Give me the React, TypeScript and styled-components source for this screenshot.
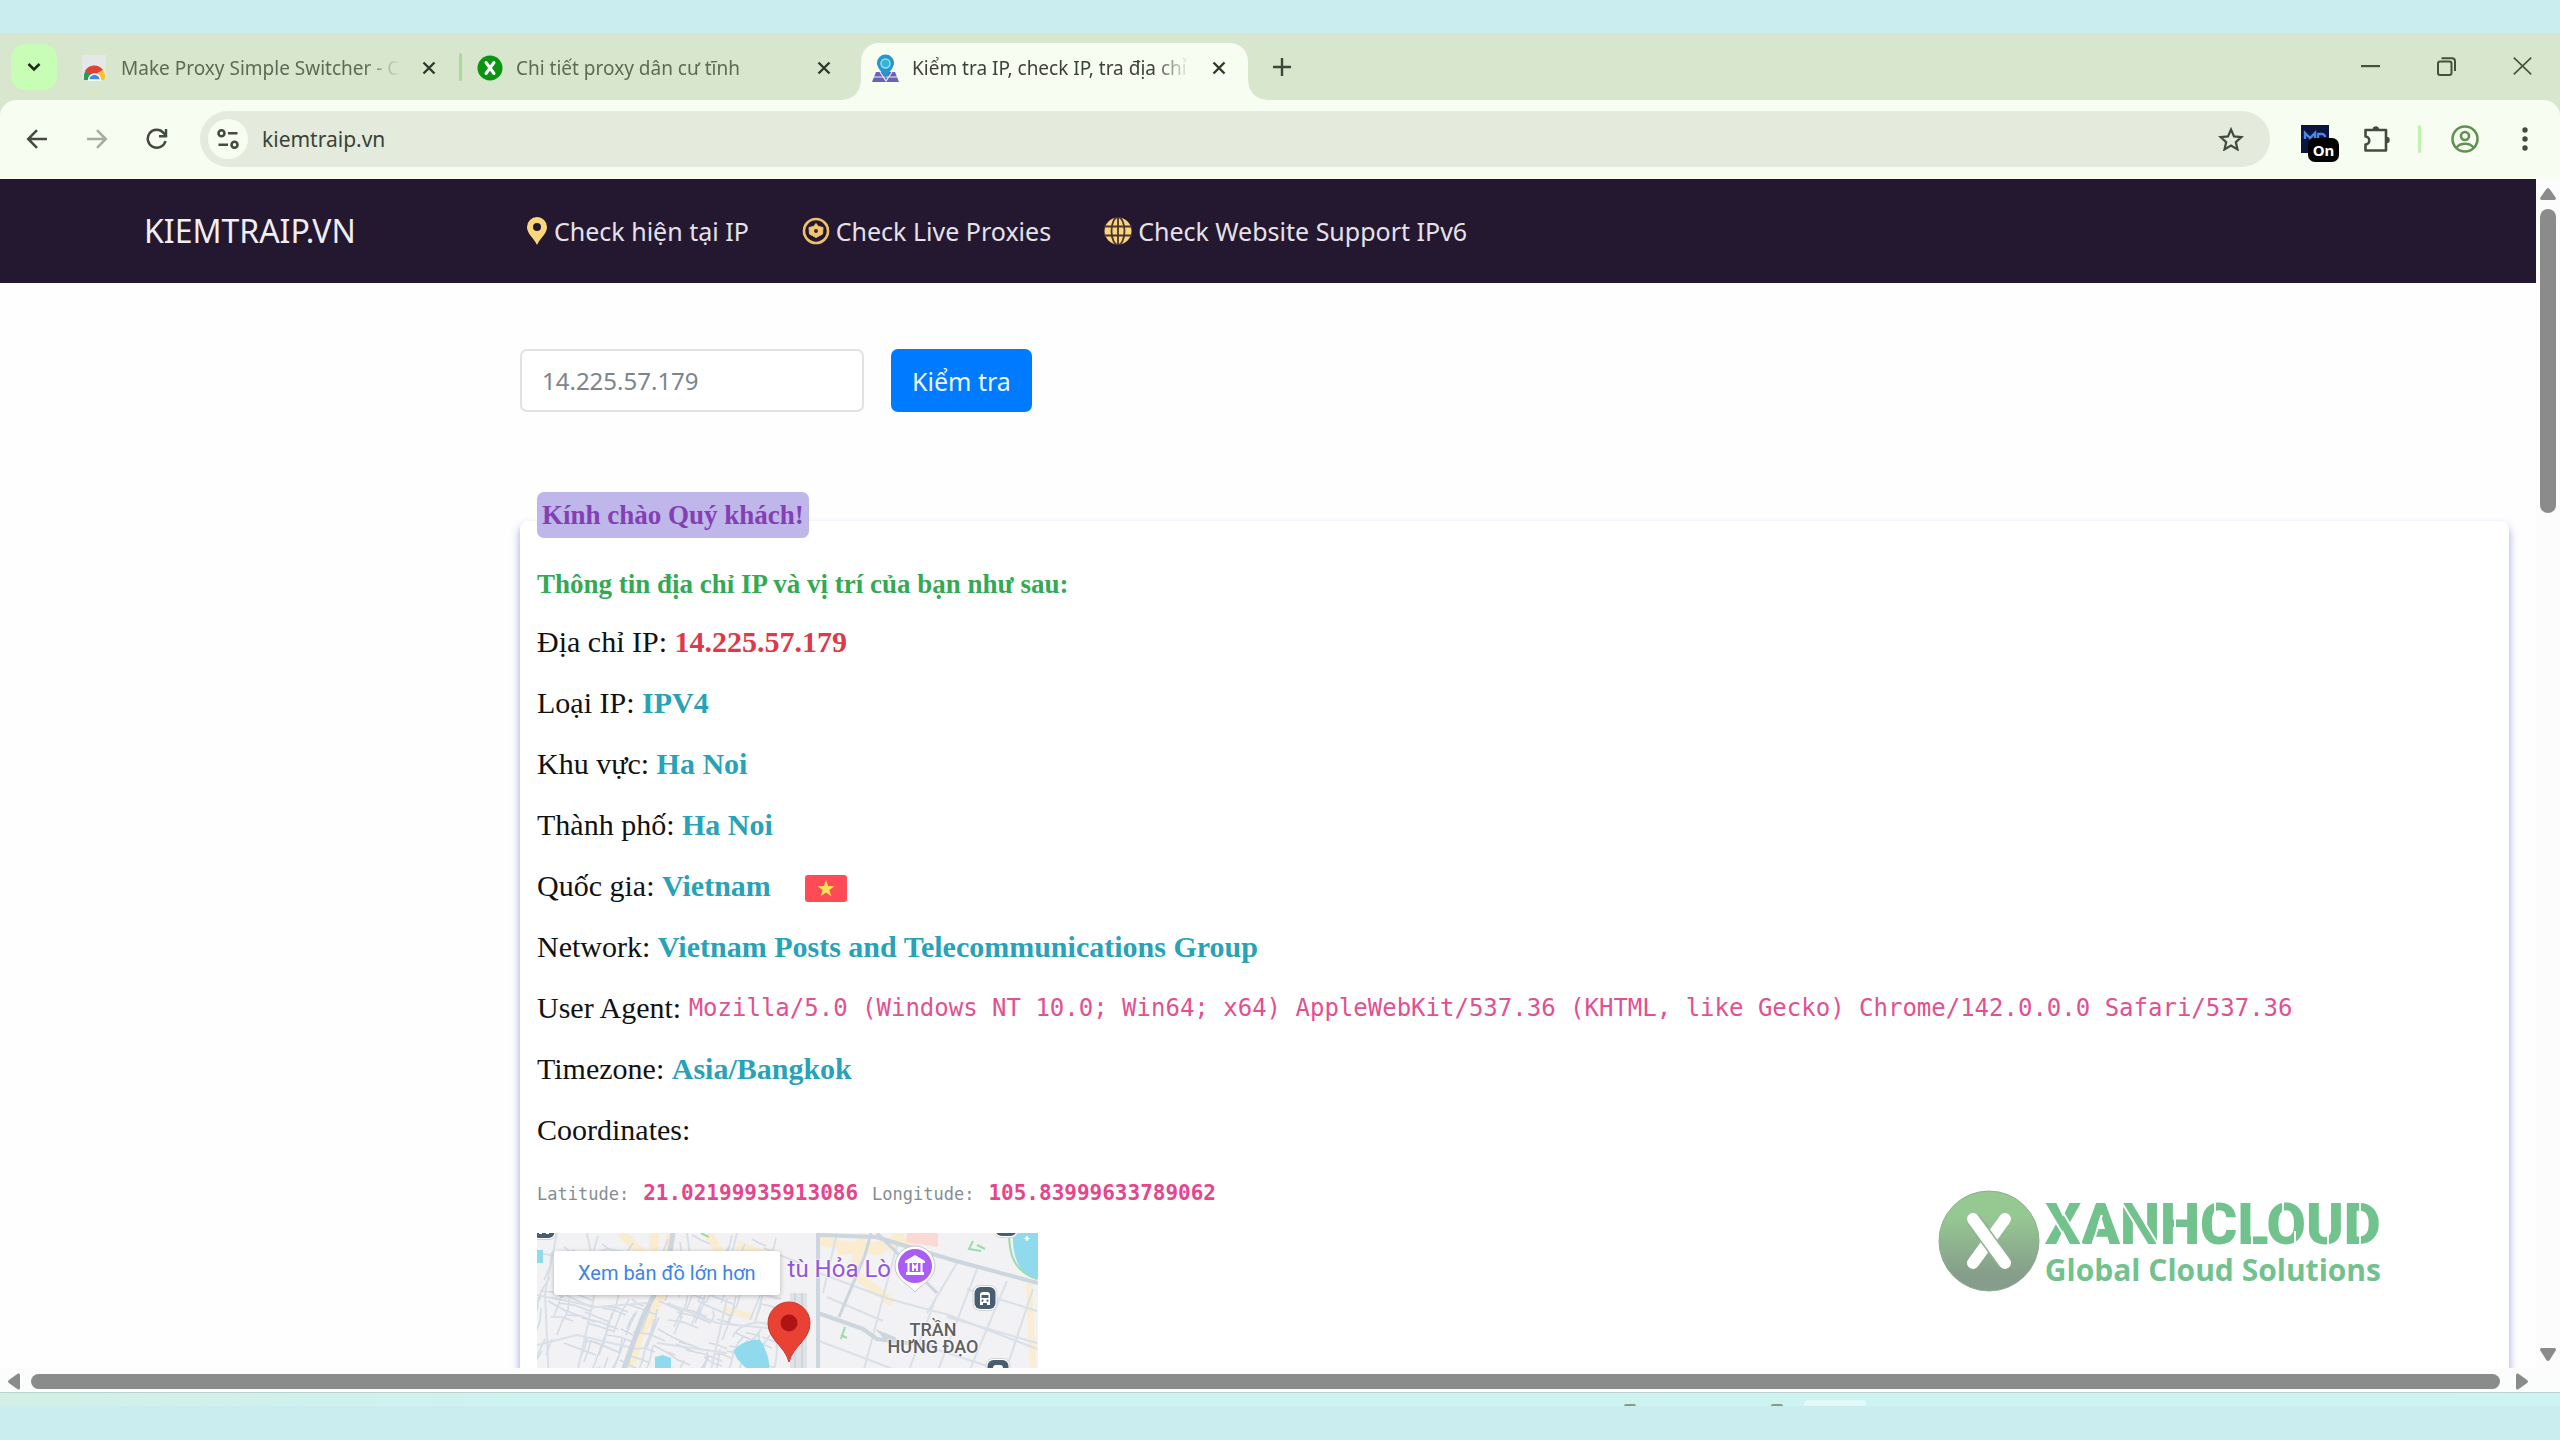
import React from "react";
import styled, { createGlobalStyle, css } from "styled-components";

const sans = `"Noto Sans", "Open Sans", sans-serif`;
const serif = `"Liberation Serif", serif`;
const mono = `"DejaVu Sans Mono", monospace`;

const Global = createGlobalStyle`
  *, *::before, *::after { box-sizing: border-box; }
  body { margin: 0; background: #caedef; font-family: ${sans}; }
  button, input { font: inherit; margin: 0; }
  button { border: 0; padding: 0; background: none; cursor: pointer; color: inherit; }
  a { color: inherit; text-decoration: none; }
  p, h1, h2 { margin: 0; }
  svg { display: block; flex: none; }
`;

/* ---------- desktop and window frame ---------- */

const Desktop = styled.div`
  position: relative;
  display: flex;
  flex-direction: column;
  height: 100vh;
  padding: 33px 0 34px;
  background: #caedef;
  overflow: hidden;
`;

const Window = styled.div`
  flex: 1;
  min-height: 0;
  display: flex;
  flex-direction: column;
  background: #d7e6cc;
`;

const Taskbar = styled.div`
  height: 14px;
  padding-left: 1624px;
  display: flex;
  align-items: flex-end;
  background: linear-gradient(90deg, #d3efe4, #cdf3f0 20%, #cdf3f2);
  border-top: 1px solid #bcd0d0;
`;

const TaskMark = styled.span`
  width: 12px;
  height: 2px;
  margin-right: 135px;
  border-radius: 2px 2px 0 0;
  background: #8c9c80;
`;

const TaskGroup = styled.span`
  width: 62px;
  height: 6px;
  margin-left: -114px;
  border-radius: 4px 4px 0 0;
  background: #e2f9fa;
`;

/* ---------- tab strip ---------- */

const TabStrip = styled.div`
  display: flex;
  align-items: flex-end;
  height: 67px;
  padding-left: 11px;
  color: #3c463a;
`;

const TabSearch = styled.button`
  display: grid;
  place-items: center;
  width: 46px;
  height: 46px;
  margin: 0 14px 10px 0;
  border-radius: 14px;
  background: #c8fdb6;
  color: #1d2b18;
`;

const Tab = styled.div<{ $active?: boolean }>`
  position: relative;
  display: flex;
  align-items: center;
  width: 387px;
  height: 57px;
  padding: 0 22px 8px 11px;
  border-radius: 18px 18px 0 0;
  color: #5b6b57;
  ${(p) =>
    p.$active &&
    css`
      background: #f8fdf1;
      color: #3b4239;
      &::before,
      &::after {
        content: "";
        position: absolute;
        bottom: 0;
        width: 18px;
        height: 18px;
      }
      &::before {
        right: 100%;
        background: radial-gradient(circle at 0 0, transparent 17px, #f8fdf1 18px);
      }
      &::after {
        left: 100%;
        background: radial-gradient(circle at 100% 0, transparent 17px, #f8fdf1 18px);
      }
    `}
`;

const TabDivider = styled.span<{ $hidden?: boolean }>`
  width: 3px;
  height: 28px;
  margin: 0 4px 19px 1px;
  border-radius: 2px;
  background: ${(p) => (p.$hidden ? "transparent" : "#a6dc96")};
`;

const TabTitle = styled.span`
  flex: 1;
  min-width: 0;
  margin: 0 22px 0 13px;
  overflow: hidden;
  white-space: nowrap;
  font-size: 19px;
  line-height: 28px;
  mask-image: linear-gradient(90deg, #000 calc(100% - 36px), transparent);
`;

const CloseButton = styled.button`
  display: grid;
  place-items: center;
  width: 14px;
  height: 20px;
  color: #2f3a2c;
`;

const NewTab = styled.button`
  display: grid;
  place-items: center;
  width: 28px;
  height: 28px;
  margin: 0 0 19px 20px;
`;

const WindowControls = styled.div`
  display: flex;
  align-items: center;
  gap: 56px;
  margin-left: auto;
  padding: 0 28px 24px 0;
`;

const ControlButton = styled.button`
  display: grid;
  place-items: center;
  width: 20px;
  height: 20px;
  color: #45503f;
`;

/* ---------- toolbar ---------- */

const Toolbar = styled.div`
  display: flex;
  align-items: center;
  height: 79px;
  padding: 0 23px 1px 25px;
  background: #f8fdf1;
  border-radius: 16px 16px 0 0;
  color: #434b40;
`;

const NavButtons = styled.div`
  display: flex;
  gap: 36px;
  margin-right: 31px;
`;

const IconButton = styled.button<{ $dim?: boolean }>`
  display: grid;
  place-items: center;
  width: 24px;
  height: 28px;
  opacity: ${(p) => (p.$dim ? 0.45 : 1)};
`;

const Omnibox = styled.div`
  flex: 1;
  display: flex;
  align-items: center;
  height: 56px;
  padding: 0 28px 0 8px;
  border-radius: 28px;
  background: #e4ebdc;
`;

const SiteInfo = styled.button`
  display: grid;
  place-items: center;
  width: 40px;
  height: 40px;
  border-radius: 50%;
  background: #f8fdf1;
`;

const Address = styled.input`
  flex: 1;
  min-width: 0;
  padding: 0 0 0 14px;
  border: 0;
  outline: 0;
  background: none;
  font-size: 21px;
  line-height: 30px;
  color: #3b4239;
`;

const ToolActions = styled.div`
  display: flex;
  align-items: center;
  margin-left: 31px;
`;

const Extension = styled.button`
  position: relative;
  width: 28px;
  height: 28px;
  margin-right: 34px;
`;

const ExtensionBadge = styled.span`
  position: absolute;
  left: 7px;
  top: 13px;
  width: 31px;
  height: 24px;
  border-radius: 7px;
  background: #000;
  color: #fff;
  font-size: 15px;
  font-weight: 700;
  line-height: 24px;
  text-align: center;
`;

const ToolDivider = styled.span`
  width: 3px;
  height: 28px;
  margin: 0 30px 0 31px;
  border-radius: 2px;
  background: #bdf2b0;
`;

const Profile = styled(IconButton)`
  width: 28px;
  margin-right: 34px;
  color: #5f9250;
`;

/* ---------- page viewport and scrollbars ---------- */

const Viewport = styled.div`
  flex: 1;
  min-height: 0;
  display: grid;
  grid-template-columns: minmax(0, 1fr) 24px;
  grid-template-rows: minmax(0, 1fr) 24px;
  background: #fcfcfd;
`;

const Page = styled.div`
  overflow: hidden;
  background: #fefefe;
`;

const VScroll = styled.div`
  display: flex;
  flex-direction: column;
  align-items: center;
  padding: 9px 0 7px;
`;

const VThumb = styled.span`
  width: 16px;
  height: 304px;
  margin: 9px 0 auto;
  border-radius: 8px;
  background: #8b8b8b;
`;

const HScroll = styled.div`
  display: flex;
  align-items: center;
  padding: 4px 8px 2px;
`;

const HThumb = styled.span`
  flex: 1;
  height: 15px;
  margin: 0 16px 0 11px;
  border-radius: 8px;
  background: #8b8b8b;
`;

/* ---------- site header ---------- */

const SiteHeader = styled.header`
  display: grid;
  grid-template-columns: 382px 1fr;
  align-items: center;
  height: 104px;
  padding-left: 144px;
  background: #241830;
  color: #f1eef3;
`;

const Brand = styled.a`
  font-size: 32px;
  line-height: 44px;
`;

const SiteNav = styled.nav`
  display: flex;
  gap: 53px;
`;

const NavLink = styled.a`
  display: flex;
  align-items: center;
  gap: 6px;
  font-size: 25px;
  line-height: 40px;
  white-space: nowrap;
  color: #e6e2e9;
`;

/* ---------- site content ---------- */

const Content = styled.main`
  padding: 66px 27px 0 520px;
`;

const LookupForm = styled.form`
  display: flex;
  gap: 27px;
`;

const HiddenLabel = styled.label`
  position: absolute;
  width: 1px;
  height: 1px;
  overflow: hidden;
  clip-path: inset(50%);
`;

const IpInput = styled.input`
  width: 344px;
  height: 63px;
  padding: 0 20px;
  border: 2px solid #dfe3e6;
  border-radius: 7px;
  background: #fff;
  font-size: 24px;
  color: #495057;
  &::placeholder { color: #7d858c; opacity: 1; }
`;

const SubmitButton = styled.button`
  height: 63px;
  padding: 0 21px;
  border-radius: 7px;
  background: #007bff;
  color: #eef6ff;
  font-size: 25px;
`;

const InfoCard = styled.section`
  display: flow-root;
  margin-top: 109px;
  padding: 0 17px 40px;
  border-radius: 8px;
  background: #fff;
  box-shadow: 0 5px 8px rgba(84, 96, 226, 0.6);
  font-family: ${serif};
`;

const Greeting = styled.h1`
  width: fit-content;
  margin-top: -29px;
  padding: 0 5px;
  border-radius: 7px;
  background: #bfb7ea;
  color: #8240b4;
  font-size: 27px;
  line-height: 46px;
`;

const Intro = styled.h2`
  margin: 26px 0 7px;
  color: #34a954;
  font-size: 27px;
  line-height: 40px;
`;

const InfoRow = styled.p`
  display: flex;
  align-items: center;
  height: 61px;
  font-size: 30px;
  line-height: 40px;
  white-space: pre;
  color: #111;
`;

const Value = styled.strong<{ $tone?: "red" }>`
  color: ${(p) => (p.$tone === "red" ? "#dc3a49" : "#27a2b7")};
`;

const AgentCode = styled.code`
  font-family: ${mono};
  font-size: 24px;
  color: #e3508f;
`;

const CoordRow = styled.p`
  display: flex;
  align-items: baseline;
  gap: 14px;
  height: 61px;
  padding-top: 18px;
  font-family: ${mono};
  font-size: 17px;
  line-height: 30px;
  color: #858c92;
`;

const CoordValue = styled.strong`
  font-size: 21px;
  color: #e5458b;
`;

const Flag = styled.svg`
  margin: 6px 0 0 34px;
`;

/* ---------- map ---------- */

const MapFrame = styled.div`
  position: relative;
  width: 501px;
  height: 300px;
  margin-top: 12px;
  overflow: hidden;
  font-family: Roboto, sans-serif;
`;

const LargerMapLink = styled.a`
  position: absolute;
  left: 17px;
  top: 18px;
  padding: 0 24px;
  border-radius: 3px;
  background: #fff;
  box-shadow: 0 1px 5px rgba(0, 0, 0, 0.25);
  color: #3b84e8;
  font-size: 20px;
  line-height: 44px;
  white-space: nowrap;
`;

const PlaceLabel = styled.span`
  position: absolute;
  right: 147px;
  top: 20px;
  display: flex;
  justify-content: flex-end;
  width: 110px;
  overflow: hidden;
  font-size: 24px;
  line-height: 32px;
  white-space: nowrap;
  color: #9256d8;
  text-shadow: 0 0 3px #fff, 0 0 3px #fff;
`;

const AreaLabel = styled.span`
  position: absolute;
  left: 340px;
  top: 88px;
  width: 112px;
  font-size: 18px;
  font-weight: 500;
  line-height: 17px;
  text-align: center;
  color: #5e6062;
  text-shadow: 0 0 3px #fff, 0 0 3px #fff;
`;

/* ---------- watermark ---------- */

const Watermark = styled.div`
  position: absolute;
  right: 179px;
  bottom: 148px;
  display: flex;
  align-items: center;
  gap: 5px;
  color: #72c28e;
`;

const WatermarkText = styled.div`
  display: flex;
  flex-direction: column;
  padding-top: 10px;
`;

const WatermarkName = styled.span`
  position: relative;
  font-family: Roboto, sans-serif;
  font-size: 57px;
  font-weight: 900;
  line-height: 48px;
`;

const StencilCuts = styled.svg`
  position: absolute;
  left: 0;
  top: 0;
`;

const WatermarkTagline = styled.span`
  font-family: "Open Sans", sans-serif;
  font-size: 30px;
  font-weight: 700;
  line-height: 42px;
`;

/* ---------- drawings ---------- */

const Cross = () => (
  <svg width="14" height="14" viewBox="0 0 14 14" stroke="currentColor" strokeWidth="2.4" fill="none">
    <path d="M1.5 1.5l11 11M12.5 1.5l-11 11" />
  </svg>
);

const StoreIcon = () => (
  <svg width="26" height="26" viewBox="0 0 26 26">
    <path d="M0 0h24v24H0z" fill="#e6e8e8" />
    <path d="M2 23a11 11 0 0 1 2-8l6 4-2 6H2z" fill="#2a9c50" />
    <path d="M3 16A10.500 10.500 0 0 1 21 15l-7 4-5 1z" fill="#dd4437" />
    <path d="M21 15a11 11 0 0 1 2 8l-1 2h-5l-2-6z" fill="#fbc12d" />
    <path d="M6.500 25a6 6 0 0 1 12 0z" fill="#4285f4" stroke="#fff" strokeWidth="1.500" />
  </svg>
);

const XanhIcon = () => (
  <svg width="26" height="26" viewBox="0 0 26 26">
    <circle cx="13" cy="13" r="12.500" fill="#0a9410" />
    <path d="M9 7.500l8 11M17 7.500l-8 11" stroke="#fff" strokeWidth="3" strokeLinecap="round" />
  </svg>
);

const MapTabIcon = () => (
  <svg width="27" height="28" viewBox="0 0 27 28">
    <path d="M4 18h19l4 10H0z" fill="#6a62b4" />
    <path d="M2 23h23M8 18l6 9 6-9" stroke="#e9eefc" strokeWidth="1.200" fill="none" />
    <path d="M13.500 24C9 17 5 13 5 9a8.500 8.500 0 0 1 17 0c0 4-4 8-8.500 15z" fill="#2497cc" />
    <circle cx="13.500" cy="9.500" r="4.500" fill="#35b2d8" stroke="#9adcf0" strokeWidth="1.500" />
  </svg>
);

const MuseumPin = () => (
  <g>
    <path d="M378 59c-4-6-20-12-20-26a20 20 0 0 1 40 0c0 14-16 20-20 26z" fill="#fff" stroke="#c9c3d2" strokeWidth="1" />
    <circle cx="378" cy="33" r="17" fill="#a95df5" />
    <path d="M378 22l-10 6v2h20v-2zM369 39h18v3h-18z" fill="#fff" />
    <path d="M371.500 30v9M384.500 30v9M376 38v-6l2 2.500 2-2.500v6" stroke="#fff" strokeWidth="2" fill="none" />
  </g>
);

const Station = ({ x, y }: { x: number; y: number }) => (
  <g transform={`translate(${x} ${y})`}>
    <rect x="-12" y="-12.500" width="24" height="25" rx="7" fill="#fff" stroke="#cfd4d8" strokeWidth="1" />
    <rect x="-10.500" y="-11" width="21" height="22" rx="6" fill="#475e72" />
    <path d="M-5 5v-8q0-3 3-3h4q3 0 3 3v8zM-5 5h3v2h-3zM2 5h3v2h-3z" fill="#fff" />
    <path d="M-3.500-3h7v3h-7z" fill="#475e72" />
    <circle cx="-2.500" cy="2.700" r="1.100" fill="#475e72" />
    <circle cx="2.500" cy="2.700" r="1.100" fill="#475e72" />
  </g>
);

/* Small irregular lanes, generated from a fixed seed so that they never change. */
const lanes = (() => {
  let seed = 11;
  const rnd = () => {
    seed = (seed * 16807) % 2147483647;
    return seed / 2147483647;
  };
  const out: string[] = [];
  for (let i = 0; i < 190; i++) {
    const x = rnd() * 245;
    const y = rnd() * 150;
    const across = rnd() > 0.5;
    const l = 12 + rnd() * 24;
    const j = rnd() * 8 - 4;
    out.push(
      across
        ? `M${x.toFixed(0)} ${y.toFixed(0)}l${(l / 2).toFixed(0)} ${(l / 6 + j).toFixed(0)}l${(l / 2).toFixed(0)} ${(l / 5).toFixed(0)}`
        : `M${x.toFixed(0)} ${y.toFixed(0)}l${(-l / 6 + j).toFixed(0)} ${(l / 2).toFixed(0)}l${(-l / 5).toFixed(0)} ${(l / 2).toFixed(0)}`
    );
  }
  return out.join("");
})();

const MapDrawing = () => (
  <svg width="501" height="300" viewBox="0 0 501 300" fill="none">
    <rect width="501" height="300" fill="#f2f1f3" />
    <g stroke="#fbecc8" strokeWidth="9" opacity=".8">
      <path d="M118 0l-2 24M134 0l-8 60-24 44-12 40M170 0l14 20M200 12l40 14M282 8l60 10 24-18M326 0l-10 40 40 30M300 18l80-10M84 0l26 26" />
      <path d="M492 50l4 90M186 76l30 8" strokeWidth="6" />
    </g>
    <path d="M370 0h31v14l-32-5z" fill="#fbd9d5" />
    <path d={lanes} stroke="#d3dbe4" strokeWidth="1.500" />
    <g stroke="#d9e0e7" strokeWidth="2">
      <path d="M282 40l70 26 60 16 88 34M290 64l56 24M282 108l90 34M300 0l-14 60M360 12l-34 128M400 62l-32 86M420 30l-30 50M440 36l-40 104M470 48l-42 100M496 56l-30 90M380 110l110 36M410 84l90 26M430 56l70 22" />
      <path d="M0 20l40 6 30-10 50 8M20 0l-12 60 4 90M50 0l10 50-20 90M0 62l60 12 50-4M0 112l40-10 60 14M150 0l4 30 40 24 50 12M130 70l50 20 60 6M120 110l70 10M200 0l-10 40M190 66l-18 80M226 60l-8 30" />
      <path d="M196 104c4-14 36-22 42-4 4 16 2 30-4 46" />
    </g>
    <path d="M253 60h17v90h-17z" fill="#dfe2e6" />
    <path d="M258 60v90M265 60v90" stroke="#d0d5da" strokeWidth="2" />
    <g stroke="#ccd6de" strokeLinejoin="round">
      <path d="M136 0l-3 18-15 42-13 26-22 60" strokeWidth="5" />
      <path d="M281 0v150" strokeWidth="4" />
      <path d="M281 2l58 2 80 24 82 22M281 80l45 16 14 10 60 8" strokeWidth="4" />
      <path d="M334 0l-6 22-26 62M340 0l60 60" strokeWidth="3" />
    </g>
    <path d="M338 96l20 8 8 10-14-3z" fill="#ccd6de" />
    <g stroke="#9bdcae" strokeWidth="2">
      <path d="M472 0c0 20 4 38 28 46M436 8l-4 8 12 2M440 12l8 4M304 102l6 3M164 0l8 4M308 94l-4 12" />
    </g>
    <g fill="#8fdaec">
      <path d="M476 0h25v46c-18-4-26-20-25-46z" />
      <path d="M197 118c6-9 18-12 26-11 6 8 10 20 9 29-10 3-22 2-26-4-4-4-8-8-9-14z" />
      <path d="M118 124l8-2 8 3v20h-16z" />
      <path d="M0 17h6v13H0z" />
    </g>
    <path d="M490 3v5M487.500 5.500h5" stroke="#fff" strokeWidth="1.500" />
    <MuseumPin />
    <Station x={448} y={65} />
    <Station x={461} y={138} />
    <Station x={7} y={-6} />
    <Station x={469} y={-8} />
    <path d="M252 129c-4-16-21-22-21-39a21 21 0 0 1 42 0c0 17-17 23-21 39z" fill="#e94235" stroke="#c5392d" strokeWidth="1" />
    <circle cx="252" cy="90" r="8.500" fill="#b01313" />
  </svg>
);

const LogoMark = () => (
  <svg width="102" height="102" viewBox="0 0 102 102">
    <defs>
      <linearGradient id="mark" x1="0" y1="0" x2="0" y2="1">
        <stop offset=".25" stopColor="#96c892" />
        <stop offset=".85" stopColor="#859d8a" />
      </linearGradient>
    </defs>
    <circle cx="51" cy="51" r="50" fill="url(#mark)" stroke="#8fae92" strokeWidth="1" />
    <path d="M67 29L35 73" stroke="#fff" strokeWidth="12" strokeLinecap="round" />
    <path d="M35 29l32 44" stroke="#8eb491" strokeWidth="15" />
    <path d="M35 29l32 44" stroke="#fff" strokeWidth="12" strokeLinecap="round" />
  </svg>
);

const tabs = [
  { title: "Make Proxy Simple Switcher - Chrome", Icon: StoreIcon },
  { title: "Chi tiết proxy dân cư tĩnh", Icon: XanhIcon },
  { title: "Kiểm tra IP, check IP, tra địa chỉ IP", Icon: MapTabIcon, active: true },
];

export default function App() {
  return (
    <Desktop>
      <Global />
      <Window>
        <TabStrip>
          <TabSearch aria-label="Search tabs">
            <svg width="14" height="10" viewBox="0 0 14 10" fill="none" stroke="currentColor" strokeWidth="2.600">
              <path d="M1.500 2L7 7.500 12.500 2" />
            </svg>
          </TabSearch>
          {tabs.map(({ title, Icon, active }, i) => (
            <React.Fragment key={title}>
              {i > 0 && <TabDivider $hidden={active} />}
              <Tab $active={active}>
                <Icon />
                <TabTitle>{title}</TabTitle>
                <CloseButton aria-label="Close tab">
                  <Cross />
                </CloseButton>
              </Tab>
            </React.Fragment>
          ))}
          <NewTab aria-label="New tab">
            <svg width="18" height="18" viewBox="0 0 18 18" stroke="currentColor" strokeWidth="2.400">
              <path d="M9 0v18M0 9h18" />
            </svg>
          </NewTab>
          <WindowControls>
            <ControlButton aria-label="Minimize">
              <svg width="19" height="3" viewBox="0 0 19 3">
                <path d="M0 0h19v2.200H0z" fill="currentColor" />
              </svg>
            </ControlButton>
            <ControlButton aria-label="Restore">
              <svg width="19" height="19" viewBox="0 0 19 19" fill="none" stroke="currentColor" strokeWidth="2">
                <rect x="1" y="4.500" width="13.500" height="13.500" rx="2" />
                <path d="M4.500 1.200H15a3 3 0 0 1 3 3V14" />
              </svg>
            </ControlButton>
            <ControlButton aria-label="Close">
              <svg width="19" height="18" viewBox="0 0 19 18" stroke="currentColor" strokeWidth="1.600">
                <path d="M.8.600l17.400 16.800M18.200.600L.8 17.400" />
              </svg>
            </ControlButton>
          </WindowControls>
        </TabStrip>

        <Toolbar>
          <NavButtons>
            <IconButton aria-label="Back">
              <svg width="22" height="20" viewBox="0 0 22 20" fill="none" stroke="currentColor" strokeWidth="2.500">
                <path d="M21 10H2.500M11 1.200L2.200 10l8.800 8.800" />
              </svg>
            </IconButton>
            <IconButton aria-label="Forward" $dim>
              <svg width="22" height="20" viewBox="0 0 22 20" fill="none" stroke="currentColor" strokeWidth="2.500">
                <path d="M1 10h18.500M11 1.200l8.800 8.800-8.800 8.800" />
              </svg>
            </IconButton>
            <IconButton aria-label="Reload">
              <svg width="22" height="22" viewBox="0 0 22 22" fill="none" stroke="currentColor" strokeWidth="2.500">
                <path d="M19.500 13A9 9 0 1 1 17.500 4.800L20 7.500" />
                <path d="M20 1v7.200h-7" />
              </svg>
            </IconButton>
          </NavButtons>
          <Omnibox>
            <SiteInfo aria-label="Site information">
              <svg width="22" height="20" viewBox="0 0 22 20" fill="none" stroke="currentColor" strokeWidth="2.600">
                <circle cx="4.500" cy="4.200" r="3" />
                <path d="M11 4.200h9.500M1.500 15.800H11" />
                <circle cx="17.500" cy="15.800" r="3" />
              </svg>
            </SiteInfo>
            <Address aria-label="Address" defaultValue="kiemtraip.vn" />
            <IconButton aria-label="Bookmark this page">
              <svg width="26" height="24" viewBox="0 0 26 24" fill="none" stroke="currentColor" strokeWidth="2.200">
                <path d="M13 2.500l3 6.900 7.400.7-5.600 5 1.700 7.300-6.500-3.900-6.500 3.900 1.700-7.300-5.600-5 7.400-.7z" />
              </svg>
            </IconButton>
          </Omnibox>
          <ToolActions>
            <Extension aria-label="Proxy switcher">
              <svg width="28" height="28" viewBox="0 0 28 28">
                <rect width="28" height="28" fill="#0a1440" />
                <path d="M4 14V8l5 5 5-5v6M17 14V9h4a3 3 0 0 1 3 3" fill="none" stroke="#4d86e0" strokeWidth="2.400" />
              </svg>
              <ExtensionBadge>On</ExtensionBadge>
            </Extension>
            <IconButton aria-label="Extensions">
              <svg width="28" height="28" viewBox="0 0 28 28" fill="none" stroke="currentColor" strokeWidth="2.600" strokeLinejoin="round">
                <path d="M2.500 5h20.500v20.500H2.500v-6c5 0 5-8 0-8z" />
                <path d="M10.500 4.500a2.500 2.500 0 0 1 5 0zM23.500 12.500a2.500 2.500 0 0 1 0 5z" fill="currentColor" strokeWidth="1.500" />
              </svg>
            </IconButton>
            <ToolDivider />
            <Profile aria-label="Profile">
              <svg width="28" height="28" viewBox="0 0 28 28" fill="none" stroke="currentColor" strokeWidth="2.600">
                <circle cx="14" cy="14" r="12.500" />
                <circle cx="14" cy="11" r="4" />
                <path d="M5.500 22.500c4-5 13-5 17 0" />
              </svg>
            </Profile>
            <IconButton aria-label="Menu">
              <svg width="6" height="24" viewBox="0 0 6 24" fill="currentColor">
                <circle cx="3" cy="3" r="2.700" />
                <circle cx="3" cy="12" r="2.700" />
                <circle cx="3" cy="21" r="2.700" />
              </svg>
            </IconButton>
          </ToolActions>
        </Toolbar>

        <Viewport>
          <Page>
            <SiteHeader>
              <Brand href="#">KIEMTRAIP.VN</Brand>
              <SiteNav>
                <NavLink href="#">
                  <svg width="22" height="28" viewBox="0 0 22 28">
                    <path fillRule="evenodd" d="M11 28C8 21 1 17 1 10a10 10 0 0 1 20 0c0 7-7 11-10 18zM11 6a4 4 0 1 0 0 8 4 4 0 0 0 0-8z" fill="#fbd77c" />
                  </svg>
                  Check hiện tại IP
                </NavLink>
                <NavLink href="#">
                  <svg width="28" height="28" viewBox="0 0 28 28" fill="none" stroke="#eec06a">
                    <circle cx="14" cy="14" r="12" strokeWidth="2.600" />
                    <path d="M14 6.500l2.500 3 4.500 1-.5 6.500-6.500 3.500L7.500 17 7 10.500l4.500-1z" fill="#f2c670" strokeWidth="1" />
                    <circle cx="14" cy="14" r="2" fill="#3a2630" stroke="none" />
                  </svg>
                  Check Live Proxies
                </NavLink>
                <NavLink href="#">
                  <svg width="28" height="28" viewBox="0 0 28 28" fill="none" stroke="#4a3530" strokeWidth="1.800">
                    <circle cx="14" cy="14" r="13.500" fill="#fbd57c" stroke="none" />
                    <path d="M0 9.500h28M0 18.500h28M14 0v28" />
                    <ellipse cx="14" cy="14" rx="6.500" ry="14" />
                  </svg>
                  Check Website Support IPv6
                </NavLink>
              </SiteNav>
            </SiteHeader>

            <Content>
              <LookupForm onSubmit={(e) => e.preventDefault()}>
                <HiddenLabel htmlFor="ip">IP</HiddenLabel>
                <IpInput id="ip" placeholder="14.225.57.179" />
                <SubmitButton type="submit">Kiểm tra</SubmitButton>
              </LookupForm>

              <InfoCard>
                <Greeting>Kính chào Quý khách!</Greeting>
                <Intro>Thông tin địa chỉ IP và vị trí của bạn như sau:</Intro>
                <InfoRow>Địa chỉ IP: <Value $tone="red">14.225.57.179</Value></InfoRow>
                <InfoRow>Loại IP: <Value>IPV4</Value></InfoRow>
                <InfoRow>Khu vực: <Value>Ha Noi</Value></InfoRow>
                <InfoRow>Thành phố: <Value>Ha Noi</Value></InfoRow>
                <InfoRow>
                  {"Quốc gia: "}
                  <Value>Vietnam</Value>
                  <Flag width="42" height="27" viewBox="0 0 42 27">
                    <rect width="42" height="27" rx="3" fill="#ff4b55" />
                    <path d="M21 5l2.100 6.100 6.400.1-5.100 3.900 1.900 6.200-5.300-3.700-5.300 3.700 1.900-6.200-5.100-3.900 6.400-.1z" fill="#ffe15a" />
                  </Flag>
                </InfoRow>
                <InfoRow>Network: <Value>Vietnam Posts and Telecommunications Group</Value></InfoRow>
                <InfoRow>
                  {"User Agent: "}
                  <AgentCode>
                    Mozilla/5.0 (Windows NT 10.0; Win64; x64) AppleWebKit/537.36 (KHTML, like Gecko) Chrome/142.0.0.0 Safari/537.36
                  </AgentCode>
                </InfoRow>
                <InfoRow>Timezone: <Value>Asia/Bangkok</Value></InfoRow>
                <InfoRow>Coordinates:</InfoRow>
                <CoordRow>
                  <span>Latitude:</span>
                  <CoordValue>21.02199935913086</CoordValue>
                  <span>Longitude:</span>
                  <CoordValue>105.83999633789062</CoordValue>
                </CoordRow>
                <MapFrame>
                  <MapDrawing />
                  <PlaceLabel>Nhà tù Hỏa Lò</PlaceLabel>
                  <AreaLabel>TRẦN<br />HƯNG ĐẠO</AreaLabel>
                  <LargerMapLink href="#">Xem bản đồ lớn hơn</LargerMapLink>
                </MapFrame>
              </InfoCard>
            </Content>
          </Page>

          <VScroll>
            <svg width="16" height="12" viewBox="0 0 16 12" fill="#8b8b8b">
              <path d="M8 0q1 0 2 1.500l6 8.500q0 2-1.500 2h-13Q0 12 0 10l6-8.500Q7 0 8 0z" />
            </svg>
            <VThumb />
            <svg width="16" height="13" viewBox="0 0 16 13" fill="#8b8b8b">
              <path d="M8 13q-1 0-2-1.500L0 2Q0 0 1.500 0h13Q16 0 16 2l-6 9.500Q9 13 8 13z" />
            </svg>
          </VScroll>
          <HScroll>
            <svg width="12" height="17" viewBox="0 0 12 17" fill="#8b8b8b">
              <path d="M0 8.500q0-1 1.500-2L10 .5Q12 0 12 2v13q0 2-2 1.500l-8.500-6Q0 9.500 0 8.500z" />
            </svg>
            <HThumb />
            <svg width="12" height="17" viewBox="0 0 12 17" fill="#8b8b8b">
              <path d="M12 8.500q0-1-1.500-2L2 .5Q0 0 0 2v13q0 2 2 1.500l8.500-6Q12 9.500 12 8.500z" />
            </svg>
          </HScroll>
        </Viewport>
      </Window>

      <Taskbar>
        <TaskMark />
        <TaskMark />
        <TaskGroup />
      </Taskbar>

      <Watermark>
        <LogoMark />
        <WatermarkText>
          <WatermarkName>
            XANHCLOUD
            <StencilCuts width="338" height="48" viewBox="0 0 338 48" stroke="#fff" strokeWidth="2">
              <path d="M13 3l25 42M0 3l25 42M57 14l-9 28M77 2l27 44M88 2l26 43M130 2v44M170 0v16M207 32v14M238 0v16M250 30v18M283 30v18M315 0v48" />
            </StencilCuts>
          </WatermarkName>
          <WatermarkTagline>Global Cloud Solutions</WatermarkTagline>
        </WatermarkText>
      </Watermark>
    </Desktop>
  );
}
